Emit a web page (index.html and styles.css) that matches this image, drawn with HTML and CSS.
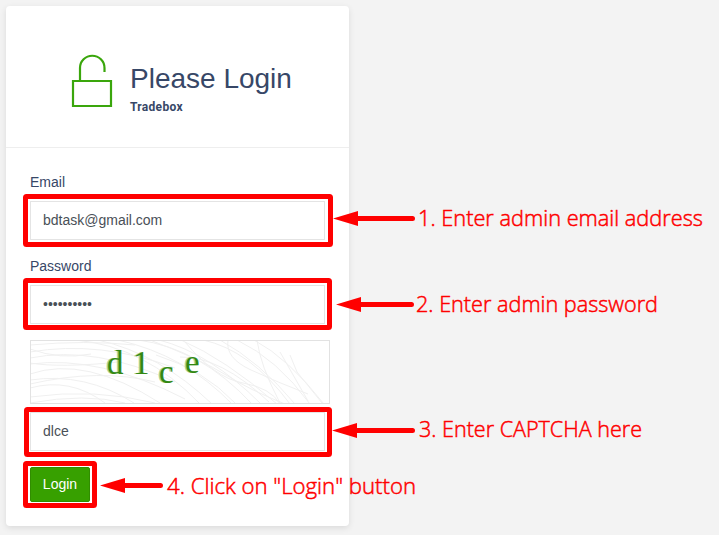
FILE: index.html
```html
<!DOCTYPE html>
<html lang="en">
<head>
<meta charset="utf-8">
<title>Please Login</title>
<link rel="stylesheet" href="styles.css">
</head>
<body>
<main class="card">
  <header class="card-header">
    <svg class="lock" width="42" height="54" viewBox="0 0 42 54"><path d="M2 27h38v25H2zM9 27V14a12 12 0 0 1 24.500 0v4"/></svg>
    <div class="heading">
      <h1>Please Login</h1>
      <strong>Tradebox</strong>
    </div>
  </header>
  <form class="form">
    <label for="email">Email</label>
    <input id="email" class="field" type="text" value="bdtask@gmail.com">
    <label for="password">Password</label>
    <input id="password" class="field secret" type="text" value="••••••••••">
    <svg class="captcha" width="300" height="64" viewBox="1 1 298 62">
      <g class="waves">
        <path d="M0 5Q55 0 105 5M0 12Q70 0 145 28M0 18Q65 5 145 42M0 24Q70 15 155 59M0 34Q55 15 130 63M0 40Q55 32 104 63M0 48Q40 37 75 63M0 57Q65 48 125 63M0 63Q55 53 95 63M0 9Q30 20 61 14M0 23Q30 28 90 22M0 44Q70 28 125 42"/>
        <path d="M45 0Q115 6 170 64M68 0Q130 14 182 64M88 0Q155 15 202 64M108 0Q170 8 222 64M129 0Q180 13 231 64M151 0Q195 19 247 64M173 0Q220 10 260 64M190 0Q230 22 265 64M207 0Q247 19 280 64M224 0Q258 18 294 64"/>
        <path d="M120 0Q172 20 196 35T255 64M155 2Q185 38 213 43T250 64M198 0Q195 18 221 30T278 54M227 0Q230 25 250 63M250 12L278 61M260 15L267 32L292 63M150 17Q190 16 239 62M126 15Q174 30 205 63"/>
      </g>
      <g class="glyph-shadow"><text x="77" y="34">d</text><text x="103" y="34">1</text><text x="129" y="43">c</text><text x="155" y="33">e</text></g>
      <g class="glyphs"><text x="77" y="34">d</text><text x="103" y="34">1</text><text x="129" y="43">c</text><text x="155" y="33">e</text></g>
    </svg>
    <input class="field" type="text" value="dlce" aria-label="Captcha">
    <button type="button">Login</button>
  </form>
</main>
<svg class="annotations" width="719" height="535" viewBox="0 0 719 535">
  <g class="frames">
    <rect x="25.500" y="196.500" width="305" height="48" rx="1"/>
    <rect x="25.500" y="280.500" width="304" height="47" rx="1"/>
    <rect x="26.500" y="409.500" width="303" height="45" rx="1"/>
    <rect x="25.500" y="463.500" width="69" height="42" rx="1"/>
  </g>
  <g class="shafts"><path d="M355 218.500H412.500M358 304.500H411.500M354 430.500H412.500M122 485.500H160.500"/></g>
  <g class="heads"><path d="M333 218.500L358 211v15zM336 304.500L361 297v15zM332 430.500L357 423v15zM100 485.500L125 478v15z"/></g>
  <g class="notes">
    <text x="418" y="226" textLength="285" lengthAdjust="spacingAndGlyphs">1. Enter admin email address</text>
    <text x="416" y="312" textLength="242" lengthAdjust="spacingAndGlyphs">2. Enter admin password</text>
    <text x="419" y="437" textLength="223" lengthAdjust="spacingAndGlyphs">3. Enter CAPTCHA here</text>
    <text x="167" y="494" textLength="249" lengthAdjust="spacingAndGlyphs">4. Click on "Login" button</text>
  </g>
</svg>
</body>
</html>
```
FILE: styles.css
```css
* { box-sizing: border-box; }
body {
  margin: 0;
  padding: 6px;
  height: 535px;
  overflow: hidden;
  background: #f3f3f3;
  color: #374767;
  font-family: "Liberation Sans", Arial, sans-serif;
  font-size: 14px;
}
.card {
  width: 343px;
  height: 520px;
  background: #fff;
  border-radius: 4px;
  box-shadow: 0 2px 6px rgba(0, 0, 0, .1);
}
.card-header {
  display: flex;
  gap: 17px;
  height: 142px;
  padding: 48px 0 0 65px;
  border-bottom: 1px solid #eee;
}
.lock { fill: none; stroke: #3aa60c; stroke-width: 2.200; }
.heading { padding-top: 9px; }
h1 { margin: 0; font-size: 28px; font-weight: 400; line-height: 32px; }
.heading strong { display: block; margin-top: 4px; font-size: 12px; line-height: 16px; font-family: Roboto, sans-serif; font-weight: 700; letter-spacing: .3px; }
.form { display: flex; flex-direction: column; align-items: flex-start; padding: 24px 24px 0; }
label { height: 20px; line-height: 20px; margin-bottom: 9px; }
.field {
  width: 295px;
  height: 39px;
  padding: 0 12px 2px;
  border: 1px solid #e4e4e4;
  background: #fff;
  color: #495057;
  font: 14px "Liberation Sans", Arial, sans-serif;
  outline: 0;
}
#email { margin-bottom: 16px; }
.secret { margin-bottom: 16px; }
.captcha { border: 1px solid #e2e2e2; margin-bottom: 8px; }
.waves { fill: none; stroke: #f0f0f0; stroke-width: 1; }
.glyphs, .glyph-shadow { font: 33px "Liberation Serif", serif; fill: #338813; }
.glyph-shadow { fill: #a6d293; transform: translate(-1.500px, 0); }
button {
  width: 60px;
  height: 35px;
  margin-top: 16px;
  padding: 0 0 2px;
  border: 1px solid #318d01;
  border-radius: 2px;
  background: #37a000;
  color: #fff;
  font: 14px "Liberation Sans", Arial, sans-serif;
}
.annotations { position: absolute; inset: 0; pointer-events: none; }
.frames, .shafts { fill: none; stroke: red; stroke-width: 5; stroke-linecap: round; }
.heads { fill: red; }
.notes { fill: red; stroke: red; stroke-width: .5; font: 300 22px "Open Sans", sans-serif; }
```
